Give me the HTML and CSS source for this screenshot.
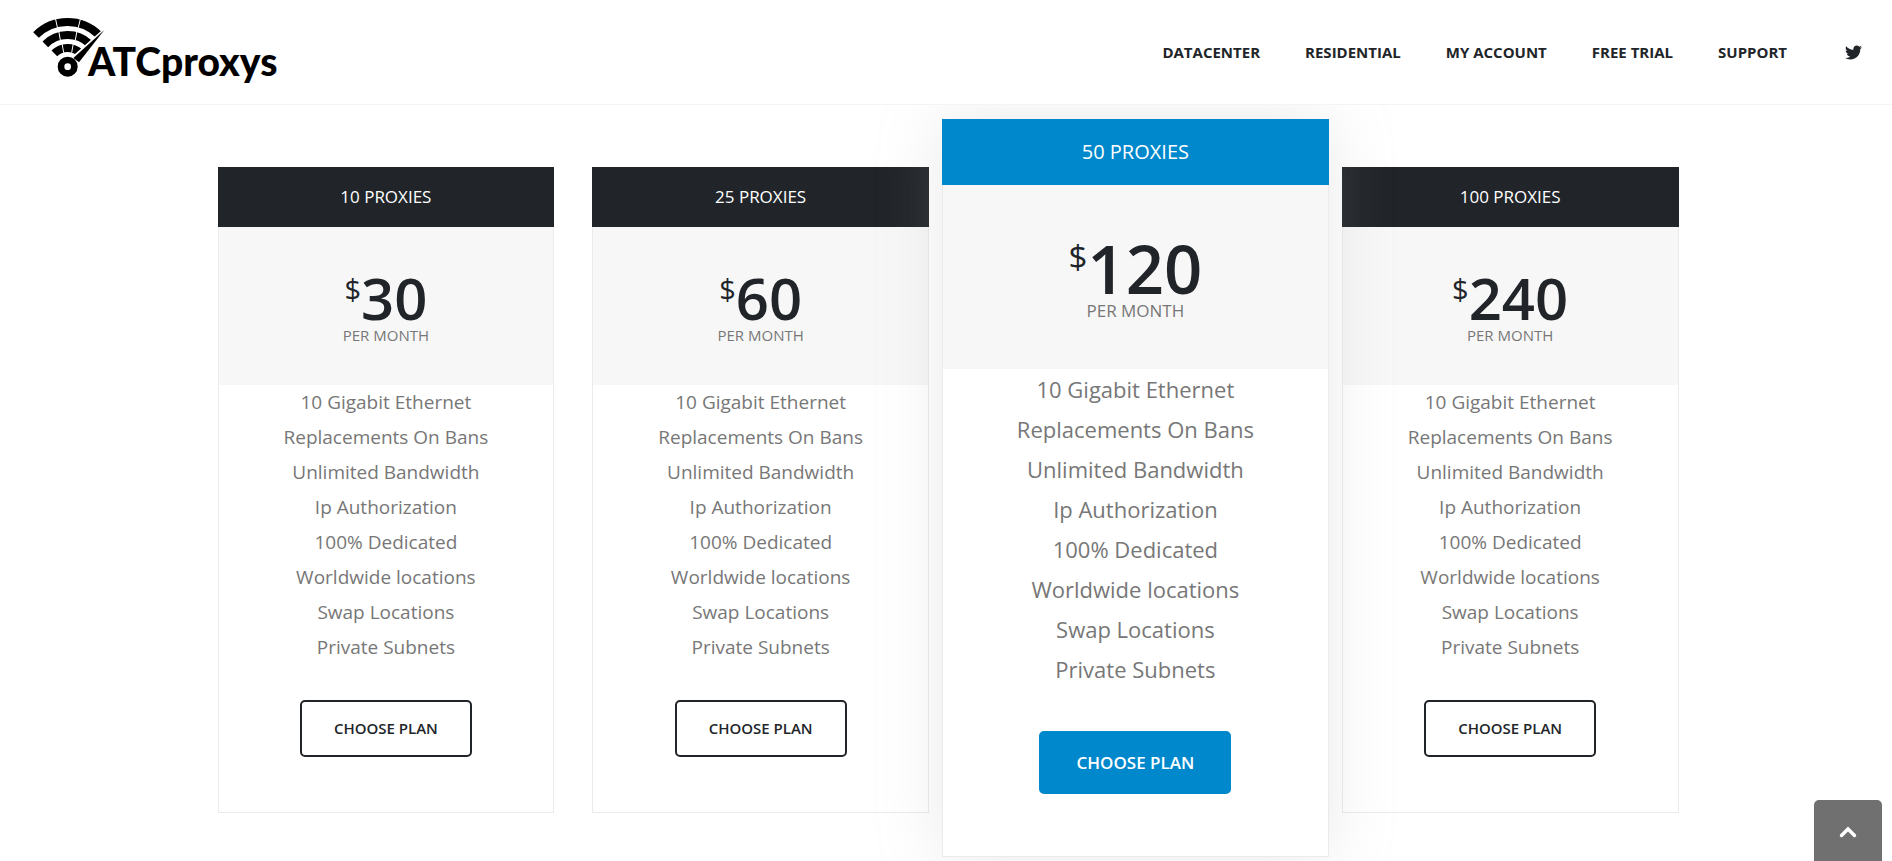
FILE: index.html
```html
<!DOCTYPE html>
<html lang="en">
<head>
<meta charset="utf-8">
<title>ATCproxys</title>
<link rel="stylesheet" href="styles.css">
</head>
<body>
<header class="header">
  <a class="logo" href="#" aria-label="ATCproxys">
    <svg width="260" height="104" viewBox="0 0 780 312">
      <g fill="none" stroke="#000" stroke-width="24">
        <path d="M48 105A134 134 0 0 1 236 104"/>
        <path d="M76 133A95 95 0 0 1 208 131"/>
        <path d="M103 160A56 56 0 0 1 180 158"/>
      </g>
      <path d="M106 54L113 86M182 54L174 86M116 92L121 120M171 92L166 120M126 130L131 158M160 130L155 158" stroke="#fff" stroke-width="3"/>
      <path d="M150 178L252 88L172 190Z" fill="#fff" stroke="#fff" stroke-width="4"/>
      <path d="M160 174L253 90L177 187Z"/>
      <circle cx="143" cy="200" r="20" fill="#fff" stroke="#000" stroke-width="20"/>
      <text class="logo-text" x="204" y="229">ATCproxys</text>
    </svg>
  </a>
  <nav class="nav">
    <a href="#">DATACENTER</a>
    <a href="#">RESIDENTIAL</a>
    <a href="#">MY ACCOUNT</a>
    <a href="#">FREE TRIAL</a>
    <a href="#">SUPPORT</a>
    <a class="social" href="#" aria-label="Twitter">
      <svg width="17" height="17" viewBox="0 0 512 512"><path fill="currentColor" d="M459.37 151.716c.325 4.548.325 9.097.325 13.645 0 138.72-105.583 298.558-298.558 298.558-59.452 0-114.68-17.219-161.137-47.106 8.447.974 16.568 1.299 25.34 1.299 49.055 0 94.213-16.568 130.274-44.832-46.132-.975-84.792-31.188-98.112-72.772 6.498.974 12.995 1.624 19.818 1.624 9.421 0 18.843-1.3 27.614-3.573-48.081-9.747-84.143-51.98-84.143-102.985v-1.299c13.969 7.797 30.214 12.67 47.431 13.319-28.264-18.843-46.781-51.005-46.781-87.391 0-19.492 5.197-37.36 14.294-52.954 51.655 63.675 129.3 105.258 216.365 109.807-1.624-7.797-2.599-15.918-2.599-24.04 0-57.828 46.782-104.934 104.934-104.934 30.213 0 57.502 12.67 76.67 33.137 23.715-4.548 46.456-13.32 66.599-25.34-7.798 24.366-24.366 44.833-46.132 57.827 21.117-2.273 41.584-8.122 60.426-16.243-14.292 20.791-32.161 39.308-52.628 54.253z"/></svg>
    </a>
  </nav>
</header>

<main class="plans">
  <section class="plan">
    <h2 class="plan-name">10 PROXIES</h2>
    <div class="plan-price">
      <p class="price"><span class="unit">$</span>30</p>
      <p class="period">PER MONTH</p>
    </div>
    <ul class="features">
      <li>10 Gigabit Ethernet</li><li>Replacements On Bans</li><li>Unlimited Bandwidth</li><li>Ip Authorization</li><li>100% Dedicated</li><li>Worldwide locations</li><li>Swap Locations</li><li>Private Subnets</li>
    </ul>
    <button class="choose" type="button">CHOOSE PLAN</button>
  </section>
  <section class="plan">
    <h2 class="plan-name">25 PROXIES</h2>
    <div class="plan-price">
      <p class="price"><span class="unit">$</span>60</p>
      <p class="period">PER MONTH</p>
    </div>
    <ul class="features">
      <li>10 Gigabit Ethernet</li><li>Replacements On Bans</li><li>Unlimited Bandwidth</li><li>Ip Authorization</li><li>100% Dedicated</li><li>Worldwide locations</li><li>Swap Locations</li><li>Private Subnets</li>
    </ul>
    <button class="choose" type="button">CHOOSE PLAN</button>
  </section>
  <section class="plan featured">
    <h2 class="plan-name">50 PROXIES</h2>
    <div class="plan-price">
      <p class="price"><span class="unit">$</span>120</p>
      <p class="period">PER MONTH</p>
    </div>
    <ul class="features">
      <li>10 Gigabit Ethernet</li><li>Replacements On Bans</li><li>Unlimited Bandwidth</li><li>Ip Authorization</li><li>100% Dedicated</li><li>Worldwide locations</li><li>Swap Locations</li><li>Private Subnets</li>
    </ul>
    <button class="choose" type="button">CHOOSE PLAN</button>
  </section>
  <section class="plan">
    <h2 class="plan-name">100 PROXIES</h2>
    <div class="plan-price">
      <p class="price"><span class="unit">$</span>240</p>
      <p class="period">PER MONTH</p>
    </div>
    <ul class="features">
      <li>10 Gigabit Ethernet</li><li>Replacements On Bans</li><li>Unlimited Bandwidth</li><li>Ip Authorization</li><li>100% Dedicated</li><li>Worldwide locations</li><li>Swap Locations</li><li>Private Subnets</li>
    </ul>
    <button class="choose" type="button">CHOOSE PLAN</button>
  </section>
</main>

<a class="to-top" href="#" aria-label="Back to top">
  <svg width="18" height="12" viewBox="0 0 18 12"><path d="M2.500 9.500L9 3L15.500 9.500" fill="none" stroke="#fff" stroke-width="3.400" stroke-linecap="round"/></svg>
</a>
</body>
</html>
```

FILE: styles.css
```css
* { box-sizing: border-box; }
body {
  margin: 0;
  background: #fff;
  color: #777;
  font-family: "Open Sans", "Noto Sans", sans-serif;
}
h2, p, ul { margin: 0; padding: 0; }

.header {
  position: relative;
  z-index: 2;
  display: flex;
  justify-content: space-between;
  align-items: center;
  padding: 0 30px 0 20px;
  background: #fff;
  border-bottom: 1px solid #f4f4f4;
}
.logo, .logo svg { display: block; }
.logo-text {
  font-family: Lato, sans-serif;
  font-weight: 900;
  font-size: 117px;
}
.nav {
  display: flex;
  align-items: center;
  gap: 45px;
}
.nav a {
  color: #212529;
  font-size: 15px;
  font-weight: 700;
  line-height: 24px;
  text-decoration: none;
}
.nav .social { display: flex; margin-left: 13px; }

.plans {
  display: grid;
  grid-template-columns: repeat(4, 1fr);
  gap: 38px;
  max-width: 1465px;
  margin: 0 auto;
  padding: 62px 0 5px 4px;
}
.plan {
  display: flex;
  flex-direction: column;
  align-items: center;
  align-self: start;
  padding-bottom: 55px;
  border: 1px solid #ebebeb;
  background: #fff;
  text-align: center;
}
.plan-name {
  align-self: stretch;
  margin: -1px -1px 0;
  padding: 18px 0;
  background: #212529;
  color: #fff;
  font-size: 17px;
  font-weight: 400;
  line-height: 24px;
}
.plan-price {
  align-self: stretch;
  padding: 43px 0 41px;
  background: #f7f7f7;
}
.price {
  display: flex;
  justify-content: center;
  color: #212529;
  font-size: 58px;
  font-weight: 600;
  line-height: 56px;
}
.unit { font-size: 29px; font-weight: 500; line-height: 38px; }
.period { font-size: 15px; line-height: 18px; }
.features {
  list-style: none;
  font-size: 19px;
  line-height: 35px;
}
.choose {
  margin-top: 35px;
  padding: 15px 32px;
  border: 2px solid #212529;
  border-radius: 5px;
  background: #fff;
  color: #212529;
  font-family: inherit;
  font-size: 15px;
  font-weight: 600;
  line-height: 23px;
}

.featured {
  position: relative;
  z-index: 1;
  margin: -48px -25px 0;
  padding-bottom: 62px;
  box-shadow: 0 0 60px rgba(170, 170, 170, .25);
}
.featured .plan-name {
  padding: 21px 0;
  background: #0088cc;
  font-size: 20px;
}
.featured .plan-price { padding: 50px 0 48px; }
.featured .price { font-size: 67px; line-height: 66px; }
.featured .unit { font-size: 33px; line-height: 44px; }
.featured .period { font-size: 17px; line-height: 20px; }
.featured .features { font-size: 22px; line-height: 40px; }
.featured .choose {
  margin-top: 42px;
  padding: 17px 35px;
  border-color: #0088cc;
  background: #0088cc;
  color: #fff;
  font-size: 17px;
  line-height: 25px;
}

.to-top {
  position: fixed;
  right: 10px;
  bottom: 0;
  z-index: 3;
  display: flex;
  justify-content: center;
  padding: 26px 25px 23px;
  border-radius: 5px 5px 0 0;
  background: #707070;
}
```
